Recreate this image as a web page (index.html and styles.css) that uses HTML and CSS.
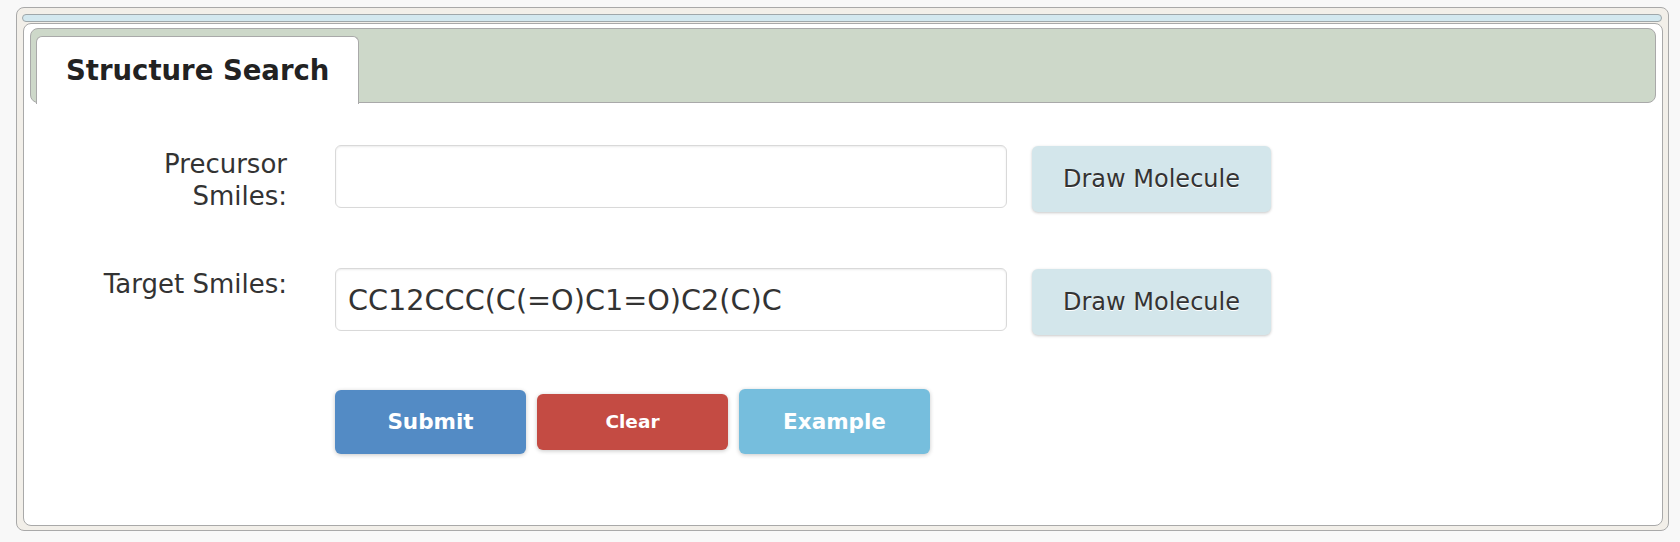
FILE: index.html
```html
<!DOCTYPE html>
<html lang="en">
<head>
<meta charset="utf-8">
<title>Structure Search</title>
<link rel="stylesheet" href="styles.css">
</head>
<body>
<div class="widget">
  <div class="topbar"></div>
  <div class="panel">
    <div class="tabbar">
      <div class="tab">Structure Search</div>
    </div>
    <form class="search-form">
      <div class="form-row">
        <label class="row-label row-label--first" for="precursor">Precursor Smiles:</label>
        <input class="smiles-input" id="precursor" type="text" value="">
        <button type="button" class="btn-draw">Draw Molecule</button>
      </div>
      <div class="form-row">
        <label class="row-label" for="target">Target Smiles:</label>
        <input class="smiles-input" id="target" type="text" value="CC12CCC(C(=O)C1=O)C2(C)C">
        <button type="button" class="btn-draw">Draw Molecule</button>
      </div>
      <div class="action-row">
        <button type="button" class="btn btn-submit">Submit</button>
        <button type="button" class="btn btn-clear">Clear</button>
        <button type="button" class="btn btn-example">Example</button>
      </div>
    </form>
  </div>
</div>
</body>
</html>
```

FILE: styles.css
```css
html, body {
  margin: 0;
  padding: 0;
}

body {
  background: #f8f8f8;
  font-family: "DejaVu Sans", Verdana, sans-serif;
  color: #333;
  padding: 7px 11px 0 16px;
}

.widget {
  border: 1px solid #a9a9a9;
  border-radius: 8px;
  background: #f2efe9;
  padding: 6px 5px 4px 6px;
}

.topbar {
  height: 8px;
  box-sizing: border-box;
  margin: 0 1px 1px -1px;
  background: #d3e8ef;
  border: 1px solid #9fa7aa;
  border-radius: 4px;
}

.panel {
  background: #fff;
  border: 1px solid #a9a9a9;
  border-radius: 8px;
  padding: 4px 6px 71px 6px;
}

.tabbar {
  height: 75px;
  box-sizing: border-box;
  background: #cdd8c9;
  border: 1px solid #a9a9a9;
  border-radius: 8px;
  padding-left: 5px;
  display: flex;
  align-items: flex-end;
}

.tab {
  height: 68px;
  box-sizing: border-box;
  margin-bottom: -2px;
  background: #fff;
  border: 1px solid #a9a9a9;
  border-bottom: 0;
  border-radius: 6px 6px 0 0;
  padding: 0 29px 2px 29px;
  display: flex;
  align-items: center;
  font-weight: bold;
  font-size: 27.5px;
  color: #222;
}

.search-form {
  margin-top: 42px;
}

.form-row {
  display: flex;
  align-items: flex-start;
  margin-bottom: 56px;
}

.form-row + .form-row {
  margin-bottom: 54px;
}

.row-label {
  width: 196px;
  margin-left: 61px;
  margin-right: 48px;
  text-align: right;
  font-size: 26px;
  line-height: 32px;
  color: #333;
}

.row-label--first {
  padding-top: 3px;
}

.smiles-input {
  width: 672px;
  height: 63px;
  box-sizing: border-box;
  margin: 0;
  padding: 0 12px;
  border: 1px solid #d9d9d9;
  border-radius: 6px;
  box-shadow: inset 0 1px 2px rgba(0, 0, 0, 0.08);
  background: #fff;
  font-family: "DejaVu Sans", Verdana, sans-serif;
  font-size: 28.7px;
  color: #333;
  outline: none;
}

.btn-draw {
  width: 239px;
  height: 66px;
  margin: 1px 0 0 25px;
  padding: 0;
  border: 0;
  border-radius: 6px;
  background: #d3e6eb;
  box-shadow: 0 1px 3px rgba(0, 0, 0, 0.22);
  font-family: "DejaVu Sans", Verdana, sans-serif;
  font-size: 24px;
  color: #333;
  text-shadow: 0 1px 0 #fff;
}

.action-row {
  display: flex;
  align-items: center;
  gap: 11px;
  margin-left: 305px;
  height: 65px;
}

.btn {
  width: 191px;
  height: 64px;
  padding: 0;
  border: 0;
  border-radius: 6px;
  box-shadow: 0 1px 4px rgba(0, 0, 0, 0.22);
  font-family: "DejaVu Sans", Verdana, sans-serif;
  font-weight: bold;
  font-size: 21.5px;
  color: #fff;
}

.btn-submit {
  background: #538bc5;
}

.btn-clear {
  height: 56px;
  background: #c44b43;
  font-size: 18.5px;
}

.btn-example {
  height: 65px;
  background: #76bedd;
}
```
